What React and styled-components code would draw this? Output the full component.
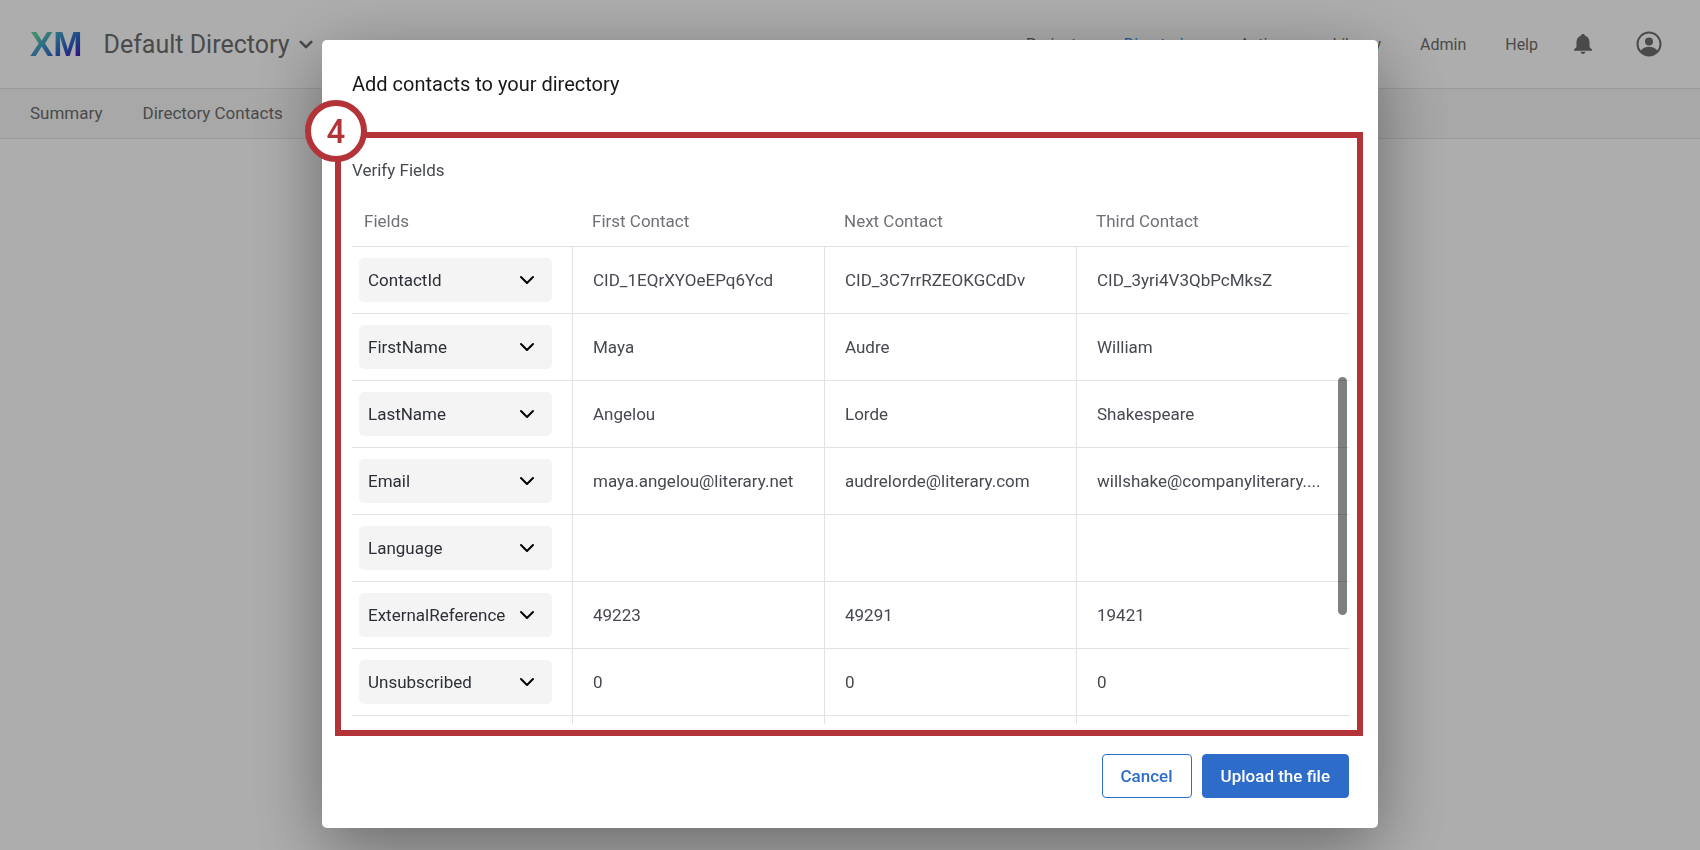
import React from "react"
import styled, { createGlobalStyle } from "styled-components"

const navLinks = ["Projects", "Directories", "Actions", "Library", "Admin", "Help"]

const headings = ["Fields", "First Contact", "Next Contact", "Third Contact"]

const rows = [
  ["ContactId", "CID_1EQrXYOeEPq6Ycd", "CID_3C7rrRZEOKGCdDv", "CID_3yri4V3QbPcMksZ"],
  ["FirstName", "Maya", "Audre", "William"],
  ["LastName", "Angelou", "Lorde", "Shakespeare"],
  ["Email", "maya.angelou@literary.net", "audrelorde@literary.com", "willshake@companyliterary...."],
  ["Language", "", "", ""],
  ["ExternalReference", "49223", "49291", "19421"],
  ["Unsubscribed", "0", "0", "0"],
]

const Chevron = ({ width, weight }) => (
  <svg width={width} height={width / 2 + 2} viewBox="0 0 16 10" fill="none" aria-hidden="true">
    <path d="M2 2l6 6 6-6" stroke="currentColor" strokeWidth={weight} strokeLinecap="round" strokeLinejoin="round" />
  </svg>
)

const BellIcon = () => (
  <svg width="18" height="20" viewBox="0 0 18 20" fill="currentColor" aria-hidden="true">
    <path d="M9 0c1.100 0 1.900.7 2 1.700 2.700.8 4.500 3.100 4.500 6.300v5l2.500 2.600v1.100H0v-1.100L2.500 13V8c0-3.200 1.800-5.500 4.500-6.300C7.100.7 7.900 0 9 0z" />
    <path d="M6.600 17.700h4.800c-.3 1.400-1.200 2.200-2.400 2.200s-2.100-.8-2.400-2.200z" />
  </svg>
)

const AvatarIcon = () => (
  <svg width="26" height="26" viewBox="0 0 26 26" aria-hidden="true">
    <circle cx="13" cy="13" r="11.500" fill="none" stroke="currentColor" strokeWidth="2" />
    <circle cx="13" cy="10.500" r="4" fill="currentColor" />
    <path d="M4.500 20c2-3 5-4.200 8.500-4.200s6.500 1.200 8.500 4.200c-2.200 3-5.200 4.500-8.500 4.500S6.700 23 4.500 20z" fill="currentColor" />
  </svg>
)

const App = () => {
  return (
    <>
      <GlobalStyle />
      <Page>
        <Header>
          <Logo>XM</Logo>
          <DirectoryButton type="button">
            Default Directory
            <Chevron width={14} weight={3} />
          </DirectoryButton>
          <Nav>
            {navLinks.map(link => (
              <NavLink key={link} href="#" $active={link === "Directories"}>
                {link}
              </NavLink>
            ))}
          </Nav>
          <BellButton type="button" aria-label="Notifications">
            <BellIcon />
          </BellButton>
          <IconButton type="button" aria-label="Account">
            <AvatarIcon />
          </IconButton>
        </Header>
        <SubNav>
          <SubLink href="#">Summary</SubLink>
          <SubLink href="#">Directory Contacts</SubLink>
        </SubNav>
      </Page>
      <Overlay>
        <Modal role="dialog" aria-modal="true" aria-labelledby="modal-title">
          <Title id="modal-title">Add contacts to your directory</Title>
          <Frame>
            <Step>4</Step>
            <Subtitle>Verify Fields</Subtitle>
            <TableWrapper>
              <Table>
                <thead>
                  <tr>
                    {headings.map(heading => (
                      <HeadCell key={heading} scope="col">
                        {heading}
                      </HeadCell>
                    ))}
                  </tr>
                </thead>
                <tbody>
                  {rows.map(([field, ...contacts]) => (
                    <tr key={field}>
                      <FieldCell>
                        <SelectBox>
                          <Select aria-label={field} defaultValue={field}>
                            <option>{field}</option>
                          </Select>
                          <Chevron width={16} weight={2} />
                        </SelectBox>
                      </FieldCell>
                      {contacts.map((value, index) => (
                        <Cell key={index}>{value}</Cell>
                      ))}
                    </tr>
                  ))}
                  <tr>
                    {headings.map(heading => (
                      <CutCell key={heading} />
                    ))}
                  </tr>
                </tbody>
              </Table>
              <ScrollThumb />
            </TableWrapper>
          </Frame>
          <Footer>
            <Button type="button">Cancel</Button>
            <Button type="button" $primary>
              Upload the file
            </Button>
          </Footer>
        </Modal>
      </Overlay>
    </>
  )
}

const GlobalStyle = createGlobalStyle`
  * {
    box-sizing: border-box;
  }

  body {
    margin: 0;
    overflow: hidden;
    background: #fff;
    color: #46494f;
    font-family: Roboto, "Liberation Sans", sans-serif;
    font-size: 17px;
  }

  button, select {
    font: inherit;
  }
`

const Page = styled.div`
  min-height: 100vh;
  color: #6e6e6e;
`

const Header = styled.header`
  display: flex;
  align-items: center;
  height: 89px;
  padding: 0 38px 0 30px;
  border-bottom: 1px solid #e4e4e4;
`

const Logo = styled.div`
  margin-right: 21px;
  background: linear-gradient(145deg, #62d0a2 20%, #3c8fcf 45%, #2f5cc6 65%, #4420c4 85%);
  background-clip: text;
  -webkit-background-clip: text;
  color: transparent;
  font-family: "Liberation Sans", sans-serif;
  font-size: 35px;
  font-weight: 700;
  line-height: 40px;
`

const DirectoryButton = styled.button`
  display: flex;
  align-items: center;
  gap: 10px;
  padding: 0;
  border: 0;
  background: none;
  color: inherit;
  font-size: 25px;
`

const Nav = styled.nav`
  display: flex;
  gap: 39px;
  margin-left: auto;
`

const NavLink = styled.a`
  color: ${({ $active }) => ($active ? "#3a84dc" : "inherit")};
  font-size: 16px;
  text-decoration: none;
`

const IconButton = styled.button`
  display: flex;
  padding: 0;
  border: 0;
  background: none;
  color: inherit;
`

const BellButton = styled(IconButton)`
  margin: 0 44px 0 36px;
`

const SubNav = styled.nav`
  display: flex;
  align-items: center;
  gap: 40px;
  height: 50px;
  padding: 0 30px 2px;
  border-bottom: 1px solid #e4e4e4;
  background: #f8f8f8;
`

const SubLink = styled.a`
  color: inherit;
  text-decoration: none;
`

const Overlay = styled.div`
  position: fixed;
  inset: 0;
  display: flex;
  align-items: flex-start;
  justify-content: center;
  padding: 40px 16px;
  background: rgba(0, 0, 0, 0.32);
`

const Modal = styled.section`
  width: 100%;
  max-width: 1056px;
  border-radius: 5px;
  background: #fff;
  box-shadow: 0 20px 72px rgba(0, 0, 0, 0.4);
`

const Title = styled.h1`
  margin: 0;
  padding: 32px 30px 36px;
  color: #17181a;
  font-size: 20px;
  font-weight: 400;
  line-height: 24px;
`

const Frame = styled.div`
  position: relative;
  margin: 0 15px 0 13px;
  padding: 20px 8px 6px 11px;
  border: 6px solid #b43338;
`

const Step = styled.div`
  position: absolute;
  top: -38px;
  left: -36px;
  display: flex;
  align-items: center;
  justify-content: center;
  width: 62px;
  height: 62px;
  border: 6px solid #b43338;
  border-radius: 50%;
  background: #fff;
  color: #b43338;
  font-size: 33px;
  font-weight: 500;
`

const Subtitle = styled.h2`
  margin: 0 0 15px;
  font-size: 17px;
  font-weight: 400;
  line-height: 24px;
`

const TableWrapper = styled.div`
  position: relative;
`

const Table = styled.table`
  width: 100%;
  border-spacing: 0;
  table-layout: fixed;
`

const HeadCell = styled.th`
  width: 252px;
  height: 50px;
  padding: 0 19px 2px;
  border-bottom: 1px solid #e2e2e2;
  color: #6f7176;
  font-weight: 400;
  text-align: left;

  &:first-child {
    width: 221px;
    padding-left: 12px;
  }

  &:last-child {
    width: auto;
  }
`

const Cell = styled.td`
  height: 67px;
  padding: 0 20px;
  overflow: hidden;
  border-right: 1px solid #e2e2e2;
  border-bottom: 1px solid #e2e2e2;
  text-overflow: ellipsis;
  white-space: nowrap;

  &:last-child {
    border-right: 0;
  }
`

const FieldCell = styled(Cell)`
  padding: 0 20px 0 7px;
`

const CutCell = styled(Cell)`
  height: 8px;
  border-bottom: 0;
`

const SelectBox = styled.div`
  display: grid;
  align-items: center;

  > * {
    grid-area: 1 / 1;
  }

  svg {
    justify-self: end;
    margin-right: 17px;
    color: #000;
    pointer-events: none;
  }
`

const Select = styled.select`
  width: 100%;
  height: 44px;
  padding: 0 36px 0 9px;
  border: 0;
  border-radius: 5px;
  appearance: none;
  background: #f4f4f4;
  color: #2c3036;
`

const ScrollThumb = styled.div`
  position: absolute;
  top: 180px;
  right: 2px;
  width: 9px;
  height: 238px;
  border-radius: 5px;
  background: rgba(0, 0, 0, 0.5);
`

const Footer = styled.footer`
  display: flex;
  justify-content: flex-end;
  gap: 10px;
  padding: 18px 29px 30px;
`

const Button = styled.button`
  height: 44px;
  padding: 0 18px;
  border: 1px solid #2d6dc9;
  border-radius: 4px;
  background: ${({ $primary }) => ($primary ? "#2d6dc9" : "#fff")};
  color: ${({ $primary }) => ($primary ? "#fff" : "#2d6dc9")};
  font-weight: 500;
`

export default App
